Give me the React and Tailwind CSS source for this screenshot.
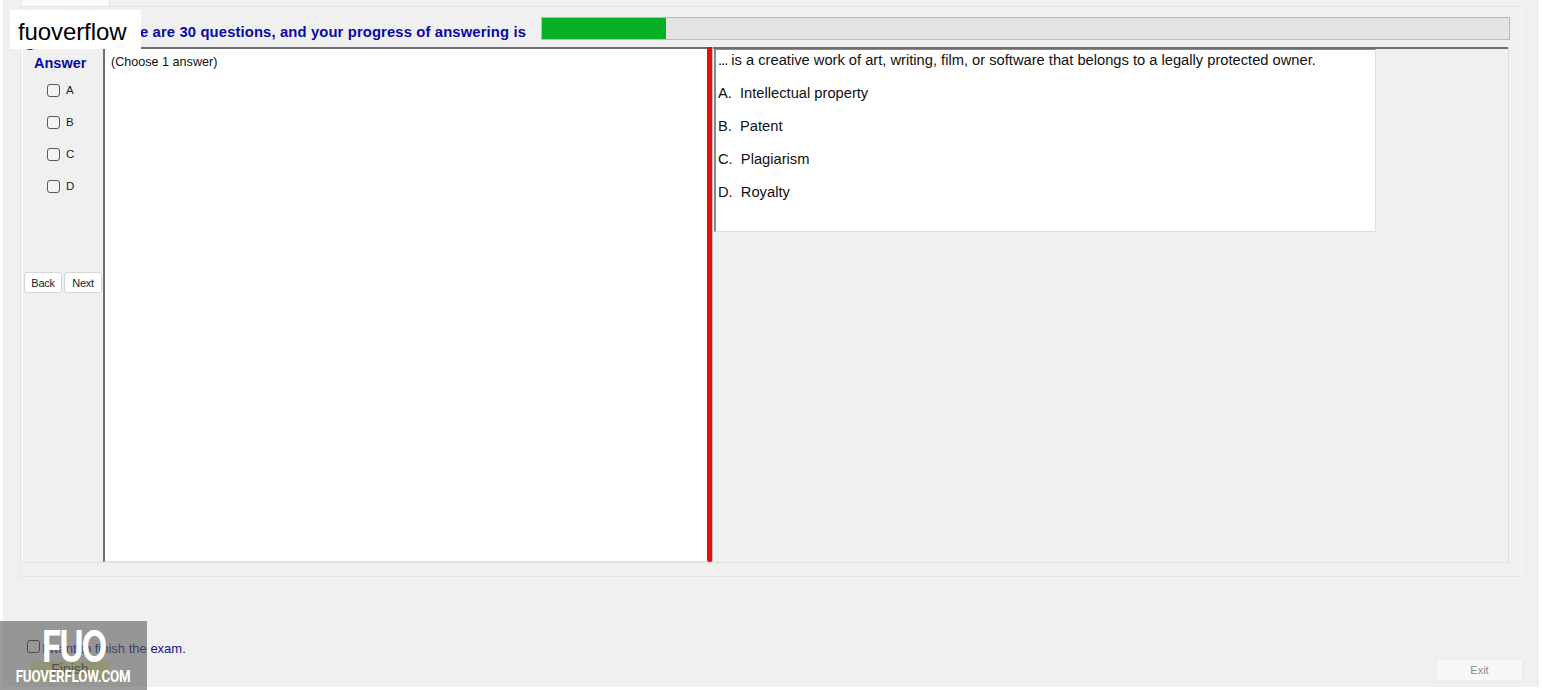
const font = "font-['Liberation_Sans',Arial,sans-serif]";

function Choice({ label }) {
  return (
    <label className="flex items-center h-[32px] pl-[24px]">
      <span className="w-[13px] h-[13px] border border-[#5a5a5a] rounded-[3px] bg-[#f4f4f4]"></span>
      <span className="ml-[6px] mt-[1px] text-[11.5px] text-[#222]">{label}</span>
    </label>
  );
}

function NavButton({ children }) {
  return (
    <button className="w-[38px] h-[21px] pt-[2px] bg-white border border-[#d6d6d6] rounded-[3px] text-[11px] text-[#222] tracking-[-0.3px]">
      {children}
    </button>
  );
}

export default function App() {
  return (
    <div className={`relative w-[1542px] h-[690px] bg-white overflow-hidden px-[3px] pb-[3px] ${font}`}>
      <div className="h-full bg-[#f0f0f0] flex flex-col pl-[17px] pr-[17px]">
        {/* tab strip */}
        <div className="h-[6px] ml-[2px] w-[88px] bg-[#fbfbfb] border-r border-[#e2e2e2]"></div>

        {/* group box */}
        <div className="h-[571px] border border-[#e6e6e6] border-r-[#f8f8f8] border-t-[#e4e4e4] bg-[#f0f0f0] pl-[1px] pr-[12px]">
          <div className="flex items-start h-[40px] pt-[10px] pl-[124px]">
            <div className="w-[395px] h-[23px] leading-[23px] pt-[4px] text-[14.8px] tracking-[0.13px] font-bold text-[#0a0aa8] whitespace-nowrap flex justify-end pr-[15px]">
              <span>There are 30 questions, and your progress of answering is</span>
            </div>
            <div className="flex-1 h-[23px] bg-[#e4e4e4] border border-[#bcbcbc] -mr-[1px]">
              <div className="w-[124px] h-full bg-[#06b025]"></div>
            </div>
          </div>

          <div className="flex h-[516px] border-r border-[#dcdcdc] border-b border-b-[#e2e2e2]">
            <div className="w-[81px] shrink-0 border-l border-[#fafafa] flex flex-col">
              <div className="text-[14.5px] leading-[20px] font-bold text-[#0a0aa8] pl-[11px] pt-[6px] h-[27px]">Answer</div>
              <Choice label="A" />
              <Choice label="B" />
              <Choice label="C" />
              <Choice label="D" />
              <div className="flex gap-[2px] pl-[1px] mt-[70px]">
                <NavButton>Back</NavButton>
                <NavButton>Next</NavButton>
              </div>
            </div>

            <div className="w-[604px] shrink-0 bg-white border-l-2 border-t-2 border-[#6e6e6e] border-b border-b-[#e2e2e2] pl-[6px] pt-[4px] text-[12.6px] text-[#111]">
              (Choose 1 answer)
            </div>

            <div className="w-[6px] shrink-0 bg-[#e80c0c] border-r border-[#bdbdbd] rounded-b-[2px]"></div>

            <div className="flex-1 border-t-2 border-[#6e6e6e] pl-[1px]">
              <div className="w-[662px] h-[183px] bg-white border-l-2 border-t border-[#8a8a8a] border-r border-r-[#e0e0e0] border-b border-b-[#dcdcdc] pl-[2px] text-[14.7px] leading-[20px] text-[#111]">
                <p className="h-[33px] whitespace-pre"><span className="tracking-[-1px]">...</span> is a creative work of art, writing, film, or software that belongs to a legally protected owner.</p>
                <p className="h-[33px] whitespace-pre">A.  Intellectual property</p>
                <p className="h-[33px] whitespace-pre">B.  Patent</p>
                <p className="h-[33px] whitespace-pre">C.  Plagiarism</p>
                <p className="h-[33px] whitespace-pre">D.  Royalty</p>
              </div>
            </div>
          </div>
        </div>

        {/* footer */}
        <div className="flex justify-between flex-1 pt-[62px] -mr-[1px]">
          <div className="pl-[7px]">
            <div className="flex items-center h-[14px]">
              <span className="w-[13px] h-[13px] border border-[#333] rounded-[3px] bg-[#f4f4f4]"></span>
              <span className="ml-[2px] mt-[5px] text-[13px] text-[#14148c] whitespace-nowrap">I want to finish the exam.</span>
            </div>
            <div className="ml-[3px] mt-[8px] w-[80px] h-[20px] bg-[#e8eda0] text-[14px] text-[#444] text-center leading-[16px]">
              Finish
            </div>
          </div>
          <div className="mt-[20px] w-[87px] h-[22px] bg-[#f8f8f8] border border-[#ececec] rounded-[2px] text-[11px] text-[#8a8a8a] text-center leading-[20px]">
            Exit
          </div>
        </div>
      </div>

      {/* watermarks */}
      <div className="absolute left-[23px] top-[36px] w-[14px] h-[14px] rounded-full bg-[#2e2a10]"></div>
      <div className="absolute left-[10px] top-[10px] w-[131px] h-[39px] bg-white text-black text-[24px] leading-[43px] pl-[8px] tracking-[-0.1px]">
        fuoverflow
      </div>
      <div className="absolute left-0 top-[621px] w-[147px] h-[69px] bg-[#5a5a5a]/60 flex flex-col items-center">
        <div className="h-[46px] text-white text-[44px] leading-[50px] font-bold tracking-[-3px] scale-x-[0.76] font-['Inter',sans-serif]">FUO</div>
        <div className="text-white text-[16px] leading-[18px] font-bold mt-[1px] font-['Roboto',sans-serif] tracking-[-0.2px] scale-x-[0.83] whitespace-nowrap">FUOVERFLOW.COM</div>
      </div>
    </div>
  );
}
